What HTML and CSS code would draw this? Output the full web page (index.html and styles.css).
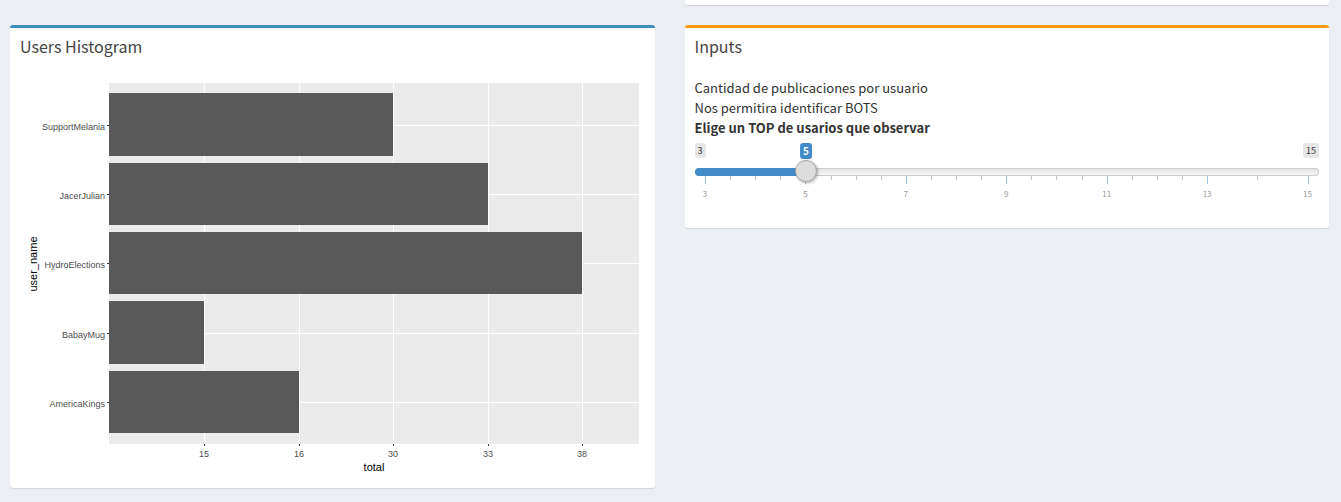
FILE: index.html
```html
<!DOCTYPE html>
<html lang="es">
<head>
<meta charset="utf-8">
<title>Users Histogram</title>
<link rel="stylesheet" href="styles.css">
</head>
<body>
<main class="dashboard">
  <div class="box box-tail"></div>

  <section class="box box-primary">
    <h3 class="box-title">Users Histogram</h3>
    <div class="box-body">
      <svg class="plot" viewBox="0 0 624 400" preserveAspectRatio="xMinYMin meet" role="img" aria-label="Users Histogram">
        <rect class="panel" x="89" y="5" width="530" height="361"/>
        <g class="grid">
          <path d="M184 5h1v361h-1zM279 5h1v361h-1zM373 5h1v361h-1zM468 5h1v361h-1zM562 5h1v361h-1z"/>
          <path d="M89 47h530v1H89zM89 116h530v1H89zM89 185h530v1H89zM89 255h530v1H89zM89 324h530v1H89z"/>
        </g>
        <g class="bars">
          <rect x="89" y="15" width="284" height="63"/>
          <rect x="89" y="85" width="379" height="62"/>
          <rect x="89" y="154" width="473" height="62"/>
          <rect x="89" y="223" width="95" height="63"/>
          <rect x="89" y="293" width="190" height="62"/>
        </g>
        <path class="ticks" d="M87 47h2v1h-2zM87 116h2v1h-2zM87 185h2v1h-2zM87 255h2v1h-2zM87 324h2v1h-2zM184 366h1v2h-1zM279 366h1v2h-1zM373 366h1v2h-1zM468 366h1v2h-1zM562 366h1v2h-1z"/>
        <g class="names">
          <text x="85" y="52">SupportMelania</text>
          <text x="85" y="121">JacerJulian</text>
          <text x="85" y="190">HydroElections</text>
          <text x="85" y="260">BabayMug</text>
          <text x="85" y="329">AmericaKings</text>
        </g>
        <g class="totals">
          <text x="184" y="379">15</text>
          <text x="279" y="379">16</text>
          <text x="373" y="379">30</text>
          <text x="468" y="379">33</text>
          <text x="562" y="379">38</text>
        </g>
        <g class="axis-title">
          <text x="354" y="393">total</text>
          <text transform="translate(17 186) rotate(-90)">user_name</text>
        </g>
      </svg>
    </div>
  </section>

  <section class="box box-warning">
    <h3 class="box-title">Inputs</h3>
    <div class="box-body">
      <div>Cantidad de publicaciones por usuario</div>
      <div>Nos permitira identificar BOTS</div>
      <label class="slider-label" for="top">Elige un TOP de usarios que observar</label>
      <div class="slider">
        <div class="bounds">
          <span class="bound">3</span>
          <span class="bound">15</span>
          <div class="value-rail"><output class="value" for="top">5</output></div>
        </div>
        <div class="rail">
          <div class="line"><div class="fill"></div></div>
          <svg class="scale" aria-hidden="true">
            <g class="minor">
              <rect x="4.167%"/><rect x="8.333%"/><rect x="12.5%"/>
              <rect x="20.833%"/><rect x="25%"/><rect x="29.167%"/>
              <rect x="37.5%"/><rect x="41.667%"/><rect x="45.833%"/>
              <rect x="54.167%"/><rect x="58.333%"/><rect x="62.5%"/>
              <rect x="70.833%"/><rect x="75%"/><rect x="79.167%"/>
              <rect x="91.667%"/>
            </g>
            <g class="major">
              <rect x="0%"/><rect x="16.667%"/><rect x="33.333%"/><rect x="50%"/><rect x="66.667%"/><rect x="83.333%"/><rect x="100%"/>
            </g>
            <g class="numbers">
              <text x="0%" y="21">3</text><text x="16.667%" y="21">5</text><text x="33.333%" y="21">7</text><text x="50%" y="21">9</text><text x="66.667%" y="21">11</text><text x="83.333%" y="21">13</text><text x="100%" y="21">15</text>
            </g>
          </svg>
          <input class="range" id="top" type="range" min="3" max="15" step="1" value="5">
        </div>
      </div>
    </div>
  </section>
</main>
</body>
</html>
```

FILE: styles.css
```css
* {
  box-sizing: border-box;
}

body {
  margin: 0;
  background: #ebeff4;
  color: #333;
  font-family: "Noto Sans CJK SC", "Noto Sans", sans-serif;
  font-size: 13px;
  line-height: 20px;
}

.dashboard {
  display: grid;
  grid-template-columns: 1fr 1fr;
  gap: 20px 30px;
  align-items: start;
  padding: 0 12px 14px 10px;
}

.box {
  min-width: 0;
  background: #fff;
  border-top: 3px solid #d2d6de;
  border-radius: 3px;
  box-shadow: 0 1px 1px rgba(0, 0, 0, 0.1);
}

.box-tail {
  grid-column: 2;
  height: 5px;
  border-top: 0;
  border-radius: 0 0 3px 3px;
}

.box-primary {
  border-top-color: #3c8dbc;
}

.box-warning {
  border-top-color: #f39c12;
}

.box-title {
  margin: 0;
  padding: 8px 10px 12px;
  color: #444;
  font-size: 16px;
  font-weight: 400;
  line-height: 20px;
}

.box-body {
  padding: 10px;
}

.plot {
  display: block;
  width: 100%;
  height: 400px;
  font-family: "Liberation Sans", Arial, sans-serif;
  font-size: 9px;
}

.panel {
  fill: #ebebeb;
}

.grid {
  fill: #fff;
}

.bars {
  fill: #595959;
}

.ticks {
  fill: #333;
}

.names {
  fill: #4d4d4d;
  text-anchor: end;
}

.totals {
  fill: #4d4d4d;
  text-anchor: middle;
}

.axis-title {
  fill: #000;
  font-size: 11px;
  text-anchor: middle;
}

.slider-label {
  display: block;
  margin-bottom: 5px;
  font-weight: 700;
}

.slider {
  margin-bottom: 18px;
}

.bounds {
  position: relative;
  display: flex;
  justify-content: space-between;
  align-items: flex-start;
  height: 17px;
}

.bound {
  padding: 0 3px;
  border-radius: 3px;
  background: #e6e6e6;
  font-size: 9px;
  line-height: 15px;
}

.value-rail {
  position: absolute;
  inset: 0 11px;
}

.value {
  position: absolute;
  left: 16.667%;
  padding: 0 3px;
  border-radius: 3px;
  background: #428bca;
  color: #fff;
  font-size: 10px;
  font-weight: 700;
  line-height: 16px;
  transform: translateX(-50%);
}

.rail {
  display: grid;
}

.rail > * {
  grid-area: 1 / 1;
  align-self: start;
}

.line {
  height: 8px;
  margin-top: 8px;
  border-radius: 8px;
  background: linear-gradient(#e2e2e2, #f8f8f8);
  box-shadow: inset 0 0 0 1px #ccc;
}

.fill {
  width: 18%;
  height: 8px;
  border-radius: 8px 0 0 8px;
  background: #428bca;
}

.scale {
  width: calc(100% - 22px);
  height: 24px;
  margin: 16px 12px 0 10px;
  overflow: visible;
  shape-rendering: crispEdges;
}

.minor rect {
  width: 1px;
  height: 4px;
  fill: #c4c4c4;
}

.major rect {
  width: 1px;
  height: 8px;
  fill: #9fc3e2;
}

.numbers {
  fill: #999;
  font-size: 8px;
  text-anchor: middle;
}

.range {
  width: 100%;
  height: 22px;
  margin: 0;
  background: transparent;
  appearance: none;
}

.range::-webkit-slider-thumb {
  width: 22px;
  height: 22px;
  border: 1px solid #aaa;
  border-radius: 50%;
  background: #ddd;
  box-shadow: 1px 1px 3px rgba(0, 0, 0, 0.3);
  appearance: none;
}
```
